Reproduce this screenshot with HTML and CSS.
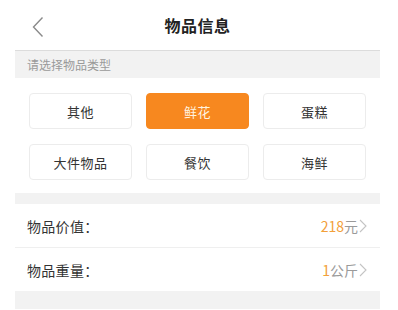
FILE: index.html
```html
<!DOCTYPE html>
<html lang="zh">
<head>
<meta charset="utf-8">
<link rel="stylesheet" href="styles.css">
</head>
<body>
<div class="page">
  <header class="topbar">
    <span class="back">
      <svg width="12" height="22" viewBox="0 0 12 22"><polyline points="10.5,1.5 1.5,11 10.5,20.5" fill="none" stroke="#8a8a8a" stroke-width="1.4"/></svg>
    </span>
    <h1 class="title">物品信息</h1>
  </header>
  <div class="hint">请选择物品类型</div>
  <div class="types">
    <div class="type">其他</div>
    <div class="type active">鲜花</div>
    <div class="type">蛋糕</div>
    <div class="type">大件物品</div>
    <div class="type">餐饮</div>
    <div class="type">海鲜</div>
  </div>
  <div class="spacer"></div>
  <div class="row">
    <span class="label">物品价值：</span>
    <span class="value"><em>218</em>元<svg class="arrow" width="8" height="14" viewBox="0 0 8 14"><polyline points="1,1 7,7 1,13" fill="none" stroke="#c4c4c4" stroke-width="1.1"/></svg></span>
  </div>
  <div class="row last">
    <span class="label">物品重量：</span>
    <span class="value"><em>1</em>公斤<svg class="arrow" width="8" height="14" viewBox="0 0 8 14"><polyline points="1,1 7,7 1,13" fill="none" stroke="#c4c4c4" stroke-width="1.1"/></svg></span>
  </div>
  <div class="footer"></div>
</div>
</body>
</html>
```
FILE: styles.css
```css
html, body {
  margin: 0;
  padding: 0;
  background: #fff;
  font-family: "Noto Sans CJK SC", "Noto Sans", sans-serif;
  height: 310px;
  overflow: hidden;
}
.page {
  margin: 0 18px 0 15px;
  display: flex;
  flex-direction: column;
}
.topbar {
  height: 50px;
  border-bottom: 1px solid #dcdcdc;
  display: flex;
  align-items: center;
  justify-content: center;
  position: relative;
}
.back {
  position: absolute;
  left: 17px;
  top: 16px;
  display: flex;
}
.title {
  margin: 0;
  font-size: 16px;
  font-weight: bold;
  color: #222;
  letter-spacing: 0.5px;
}
.hint {
  height: 27px;
  background: #f2f2f2;
  color: #9a9a9a;
  font-size: 12px;
  line-height: 27px;
  padding-left: 12px;
}
.types {
  display: grid;
  grid-template-columns: repeat(3, 1fr);
  column-gap: 14px;
  row-gap: 15px;
  padding: 15px 14px 13px 14px;
}
.type {
  height: 34px;
  border: 1px solid #ececec;
  border-radius: 4px;
  display: flex;
  align-items: center;
  justify-content: center;
  font-size: 13px;
  color: #333;
  letter-spacing: 0.5px;
}
.type.active {
  background: #f7881f;
  border-color: #f7881f;
  color: #fff3e0;
}
.spacer {
  height: 11px;
  background: #f2f2f2;
}
.row {
  height: 43px;
  display: flex;
  align-items: center;
  justify-content: space-between;
  padding: 0 13px 0 12px;
  border-bottom: 1px solid #efefef;
}
.row.last {
  border-bottom: none;
}
.label {
  font-size: 14px;
  color: #333;
  letter-spacing: 0.3px;
}
.value {
  font-size: 14px;
  color: #9a9a9a;
  display: flex;
  align-items: center;
}
.value em {
  font-style: normal;
  color: #f2a03a;
}
.arrow {
  margin-left: 1px;
}
.footer {
  height: 18px;
  background: #f2f2f2;
}
```
